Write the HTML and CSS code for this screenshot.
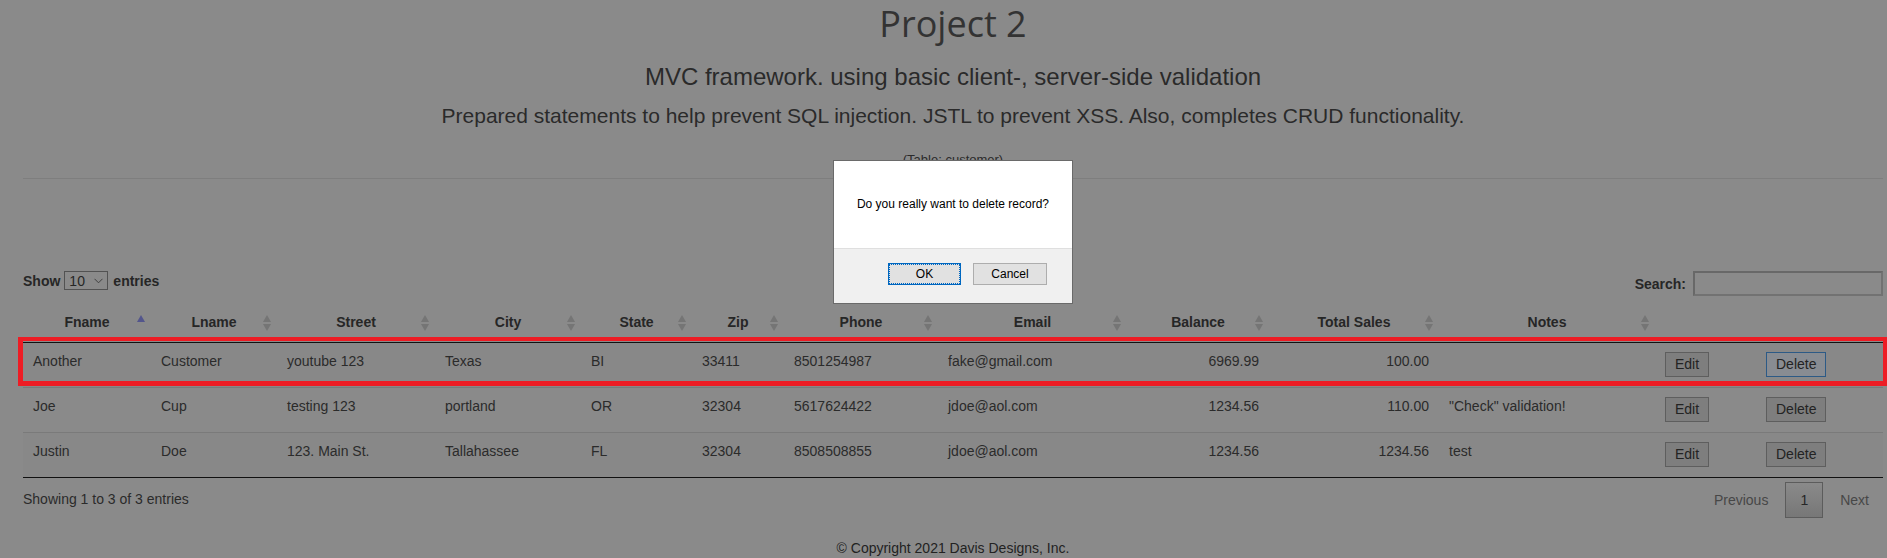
FILE: index.html
```html
<!DOCTYPE html>
<html lang="en">
<head>
<meta charset="utf-8">
<title>Project 2</title>
<link rel="stylesheet" href="styles.css">
</head>
<body>
<div class="page">
  <header class="intro">
    <h1 class="title">Project 2</h1>
    <h3 class="subtitle">MVC framework. using basic client-, server-side validation</h3>
    <p class="lead">Prepared statements to help prevent SQL injection. JSTL to prevent XSS. Also, completes CRUD functionality.</p>
    <p class="table-name">(Table: customer)</p>
  </header>
  <hr class="rule">
  <section class="dt">
    <div class="dt-top">
      <div class="dt-length">
        <span>Show</span>
        <span class="select">10<svg class="chev" width="9" height="6" viewBox="0 0 9 6"><polyline points="0.5,0.8 4.5,4.8 8.5,0.8" fill="none" stroke="#404040" stroke-width="1"/></svg></span>
        <span>entries</span>
      </div>
      <div class="dt-filter">
        <span>Search:</span>
        <span class="search-input"></span>
      </div>
    </div>
    <div class="table-wrap">
      <table class="grid">
        <colgroup>
          <col class="w-fname"><col class="w-lname"><col class="w-street"><col class="w-city"><col class="w-state"><col class="w-zip"><col class="w-phone"><col class="w-email"><col class="w-balance"><col class="w-sales"><col class="w-notes"><col class="w-edit"><col class="w-delete">
        </colgroup>
        <thead>
          <tr>
            <th class="sort asc">Fname</th>
            <th class="sort">Lname</th>
            <th class="sort">Street</th>
            <th class="sort">City</th>
            <th class="sort">State</th>
            <th class="sort">Zip</th>
            <th class="sort">Phone</th>
            <th class="sort">Email</th>
            <th class="sort">Balance</th>
            <th class="sort">Total Sales</th>
            <th class="sort">Notes</th>
            <th></th>
            <th></th>
          </tr>
        </thead>
        <tbody>
          <tr class="odd">
            <td>Another</td><td>Customer</td><td>youtube 123</td><td>Texas</td><td>BI</td><td>33411</td><td>8501254987</td><td>fake@gmail.com</td><td class="num">6969.99</td><td class="num">100.00</td><td></td>
            <td><button class="btn">Edit</button></td>
            <td><button class="btn focus">Delete</button></td>
          </tr>
          <tr class="even">
            <td>Joe</td><td>Cup</td><td>testing 123</td><td>portland</td><td>OR</td><td>32304</td><td>5617624422</td><td>jdoe@aol.com</td><td class="num">1234.56</td><td class="num">110.00</td><td>"Check" validation!</td>
            <td><button class="btn">Edit</button></td>
            <td><button class="btn">Delete</button></td>
          </tr>
          <tr class="odd">
            <td>Justin</td><td>Doe</td><td>123. Main St.</td><td>Tallahassee</td><td>FL</td><td>32304</td><td>8508508855</td><td>jdoe@aol.com</td><td class="num">1234.56</td><td class="num">1234.56</td><td>test</td>
            <td><button class="btn">Edit</button></td>
            <td><button class="btn">Delete</button></td>
          </tr>
        </tbody>
      </table>
      <div class="highlight"></div>
    </div>
    <div class="dt-bottom">
      <div class="dt-info">Showing 1 to 3 of 3 entries</div>
      <div class="dt-paginate">
        <span class="pg disabled">Previous</span>
        <span class="pg current">1</span>
        <span class="pg disabled">Next</span>
      </div>
    </div>
  </section>
  <footer class="foot">© Copyright 2021 Davis Designs, Inc.</footer>
</div>

<div class="dialog">
  <div class="dialog-body">Do you really want to delete record?</div>
  <div class="dialog-actions">
    <button class="dbtn ok">OK</button>
    <button class="dbtn">Cancel</button>
  </div>
</div>
</body>
</html>
```

FILE: styles.css
```css
html, body {
  margin: 0;
  padding: 0;
}

body {
  position: relative;
  width: 1887px;
  height: 558px;
  overflow: hidden;
  background: #8a8a8a;
  font-family: "Liberation Sans", Arial, sans-serif;
  font-size: 14px;
  line-height: 20px;
  color: #2b2b2b;
}

.page {
  width: 1860px;
  margin-left: 23px;
}

/* ---------- intro ---------- */
.intro {
  text-align: center;
}

.title {
  margin: 2px 0 0;
  font-family: "Open Sans", sans-serif;
  font-size: 36px;
  line-height: 44px;
  font-weight: 400;
  color: #333;
}

.subtitle {
  margin: 16px 0 0;
  font-size: 24px;
  line-height: 30px;
  font-weight: 400;
  color: #2a2a2a;
}

.lead {
  margin: 10px 0 0;
  font-size: 21px;
  line-height: 28px;
  color: #2a2a2a;
}

.table-name {
  margin: 21px 0 0;
  font-size: 13px;
  line-height: 18px;
  color: #2a2a2a;
}

.rule {
  margin: 9px 0 0;
  height: 0;
  border: 0;
  border-top: 1px solid #7e7e7e;
}

/* ---------- datatable controls ---------- */
.dt-top {
  margin-top: 92px;
  height: 25px;
  display: flex;
  justify-content: space-between;
  align-items: flex-start;
}

.dt-length {
  height: 19px;
  display: flex;
  align-items: center;
  font-weight: bold;
  color: #262626;
}

.select {
  box-sizing: border-box;
  width: 44px;
  height: 19px;
  margin: 0 5px 0 4px;
  padding: 0 4px;
  display: flex;
  align-items: center;
  justify-content: space-between;
  border: 1px solid #525252;
  font-weight: normal;
  color: #262626;
}

.chev {
  display: block;
  margin-top: 1px;
}

.dt-filter {
  height: 25px;
  display: flex;
  align-items: center;
  font-weight: bold;
  color: #262626;
}

.search-input {
  box-sizing: border-box;
  width: 190px;
  height: 25px;
  margin-left: 7px;
  border: 2px solid #686868;
  border-right-color: #727272;
  border-bottom-color: #727272;
}

/* ---------- table ---------- */
.table-wrap {
  position: relative;
  margin-top: 6px;
}

.grid {
  width: 1860px;
  table-layout: fixed;
  border-collapse: separate;
  border-spacing: 0;
}

.w-fname { width: 128px; }
.w-lname { width: 126px; }
.w-street { width: 158px; }
.w-city { width: 146px; }
.w-state { width: 111px; }
.w-zip { width: 92px; }
.w-phone { width: 154px; }
.w-email { width: 189px; }
.w-balance { width: 142px; }
.w-sales { width: 170px; }
.w-notes { width: 216px; }
.w-edit { width: 101px; }
.w-delete { width: 127px; }

.grid th {
  position: relative;
  padding: 10px 18px;
  line-height: 20px;
  font-weight: bold;
  text-align: center;
  color: #262626;
  border-bottom: 1px solid #111;
  white-space: nowrap;
}

.grid th.sort::before,
.grid th.sort::after {
  content: "";
  position: absolute;
  right: 6px;
  width: 0;
  height: 0;
  border-left: 4px solid transparent;
  border-right: 4px solid transparent;
}

.grid th.sort::before {
  top: 13px;
  border-bottom: 7px solid #757575;
}

.grid th.sort::after {
  top: 22px;
  border-top: 7px solid #757575;
}

.grid th.asc::before {
  border-bottom-color: #53558c;
}

.grid th.asc::after {
  display: none;
}

.grid td {
  padding: 8px 10px;
  line-height: 20px;
  vertical-align: top;
  white-space: nowrap;
  color: #2b2b2b;
}

.grid tbody tr + tr td {
  border-top: 1px solid #7a7a7a;
}

.grid tbody tr:last-child td {
  border-bottom: 1px solid #111;
}

.grid tr.odd td {
  background: #888;
}

.grid td.num {
  text-align: right;
}

.btn {
  display: block;
  width: fit-content;
  box-sizing: border-box;
  height: 25px;
  margin: 1px 0 2px;
  padding: 0 9px;
  border: 1px solid #5e5e5e;
  background: #7e7e7e;
  font-family: "Liberation Sans", Arial, sans-serif;
  font-size: 14px;
  line-height: 23px;
  color: #232323;
  cursor: pointer;
}

.btn.focus {
  border-color: #2c5a86;
  background: #888c92;
}

.highlight {
  position: absolute;
  left: -5px;
  top: 35px;
  width: 1869px;
  height: 49px;
  box-sizing: border-box;
  border-style: solid;
  border-color: #ed1c24;
  border-width: 4px 4px 5px 5px;
  pointer-events: none;
}

/* ---------- bottom ---------- */
.dt-bottom {
  display: flex;
  justify-content: space-between;
  align-items: flex-start;
}

.dt-info {
  padding-top: 10.5px;
  line-height: 20px;
  color: #2b2b2b;
}

.dt-paginate {
  margin-top: 4px;
  margin-right: -1px;
  display: flex;
}

.pg {
  margin-left: 2px;
  padding: 7px 14px;
  border: 1px solid transparent;
  line-height: 20px;
  color: #474747;
}

.pg.current {
  border-color: #5c5c5c;
  background: linear-gradient(#8a8a8a, #777);
  color: #262626;
}

.foot {
  margin-top: 20px;
  text-align: center;
  line-height: 20px;
  color: #222;
}

/* ---------- confirm dialog ---------- */
.dialog {
  position: absolute;
  left: 833px;
  top: 160px;
  width: 240px;
  height: 144px;
  box-sizing: border-box;
  display: flex;
  flex-direction: column;
  border: 1px solid #6a6a6a;
  background: #fff;
  font-family: "Liberation Sans", Arial, sans-serif;
  font-size: 12px;
  color: #000;
}

.dialog-body {
  height: 87px;
  box-sizing: border-box;
  padding-top: 35px;
  line-height: 16px;
  text-align: center;
}

.dialog-actions {
  flex: 1;
  display: flex;
  justify-content: flex-end;
  align-items: flex-start;
  gap: 12px;
  padding: 14px 25px 0 0;
  border-top: 1px solid #dfdfdf;
  background: #f0f0f0;
}

.dbtn {
  box-sizing: border-box;
  width: 74px;
  height: 22px;
  padding: 0;
  border: 1px solid #adadad;
  background: #e1e1e1;
  font-family: "Liberation Sans", Arial, sans-serif;
  font-size: 12px;
  line-height: 20px;
  color: #000;
}

.dbtn.ok {
  width: 73px;
  border-color: #0067c0;
  outline: 1px dotted #0067c0;
  outline-offset: -2px;
}
```
